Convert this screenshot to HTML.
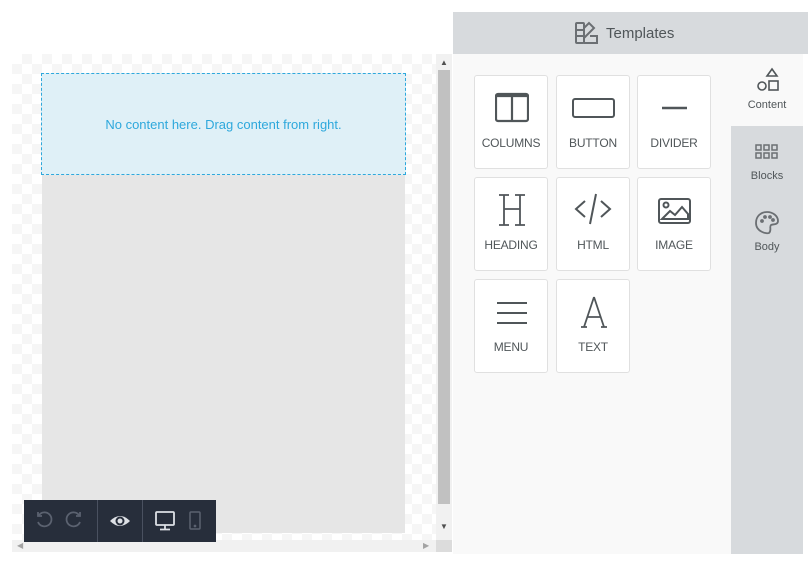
<!DOCTYPE html>
<html><head><style>
*{margin:0;padding:0;box-sizing:border-box}
body{width:808px;height:562px;background:#fff;position:relative;overflow:hidden;font-family:"Liberation Sans",sans-serif}
.abs{position:absolute}
.checker{left:12px;top:54px;width:424px;height:486px;background-color:#fff;background-image:linear-gradient(45deg,#f6f6f6 25%,transparent 25%,transparent 75%,#f6f6f6 75%),linear-gradient(45deg,#f6f6f6 25%,transparent 25%,transparent 75%,#f6f6f6 75%);background-size:20px 20px;background-position:0 0,10px 10px}
.card{position:absolute;width:74px;height:94px;background:#fff;border:1px solid #e0e0e0;border-radius:3px;text-align:center}
.card svg{position:absolute;left:20px;top:14px}
.card span{position:absolute;left:0;right:0;top:60px;font-size:12px;color:#505659;letter-spacing:-0.2px}
.tab{position:absolute;left:731px;width:72px;text-align:center;font-size:11px;color:#505659}
</style></head><body>
<div class="abs checker"></div>
<div class="abs" style="left:41px;top:73px;width:365px;height:102px;background:#dff0f7;border:1px dashed #2ea8dc;color:#2ea8dc;font-size:13px;text-align:center;line-height:102px">No content here. Drag content from right.</div>
<div class="abs" style="left:42px;top:175px;width:363px;height:358px;background:#e6e6e6"></div>
<div class="abs" style="left:436px;top:54px;width:16px;height:486px;background:#f1f1f1"></div>
<div class="abs" style="left:438px;top:70px;width:12px;height:434px;background:#c1c1c1"></div>
<div class="abs" style="left:440px;top:58px;font-size:8px;color:#505050">▲</div>
<div class="abs" style="left:440px;top:522px;font-size:8px;color:#505050">▼</div>
<div class="abs" style="left:12px;top:540px;width:424px;height:12px;background:#f1f1f1"></div>
<div class="abs" style="left:436px;top:540px;width:16px;height:12px;background:#dcdcdc"></div>
<div class="abs" style="left:17px;top:541px;font-size:8px;color:#a3a3a3">◀</div>
<div class="abs" style="left:423px;top:541px;font-size:8px;color:#a3a3a3">▶</div>
<div class="abs" style="left:24px;top:500px;width:192px;height:42px;background:#272e3b">
<svg class="abs" style="left:10px;top:10px" width="20" height="20" viewBox="0 0 20 20" fill="none" stroke="#5b6270" stroke-width="1.8"><path d="M5 5 A7 7 0 1 1 4 12"/><path d="M4 2 V6 H8"/></svg>
<svg class="abs" style="left:40px;top:10px" width="20" height="20" viewBox="0 0 20 20" fill="none" stroke="#5b6270" stroke-width="1.8"><path d="M15 5 A7 7 0 1 0 16 12"/><path d="M16 2 V6 H12"/></svg>
<div class="abs" style="left:73px;top:0;width:1px;height:42px;background:#4a5160"></div>
<svg class="abs" style="left:85px;top:11px" width="22" height="20" viewBox="0 0 22 20"><path d="M1 10 Q11 0 21 10 Q11 20 1 10Z" fill="#dde0e5"/><circle cx="11" cy="10" r="4.5" fill="#272e3b"/><circle cx="11" cy="10" r="2.5" fill="#dde0e5"/></svg>
<div class="abs" style="left:118px;top:0;width:1px;height:42px;background:#4a5160"></div>
<svg class="abs" style="left:130px;top:10px" width="22" height="22" viewBox="0 0 22 22" fill="none" stroke="#dde0e5" stroke-width="1.8"><rect x="2" y="2" width="18" height="13" rx="1"/><path d="M11 15 V19 M6 19.5 H16"/></svg>
<svg class="abs" style="left:164px;top:10px" width="14" height="22" viewBox="0 0 14 22" fill="none" stroke="#5b6270" stroke-width="1.5"><rect x="2" y="2" width="10" height="17" rx="1"/><circle cx="7" cy="16" r="0.6" fill="#5b6270"/></svg>
</div>
<div class="abs" style="left:453px;top:12px;width:355px;height:42px;background:#d7dadd"></div>
<svg class="abs" style="left:574px;top:21px" width="26" height="24" viewBox="0 0 26 24" fill="none" stroke="#6b6f73" stroke-width="2"><rect x="2" y="2" width="8" height="20" rx="1"/><path d="M2 9 H10 M2 15 H10"/><path d="M10 7 L15 2 L20 7 L10 17"/><path d="M10 22 H23 V15 H16"/></svg>
<div class="abs" style="left:606px;top:25px;font-size:15px;color:#505659">Templates</div>
<div class="abs" style="left:453px;top:54px;width:278px;height:500px;background:#f9f9f9"></div>
<div class="abs" style="left:731px;top:54px;width:72px;height:500px;background:#d7dadd"></div>
<div class="abs" style="left:731px;top:54px;width:72px;height:72px;background:#f9f9f9"></div>
<svg class="abs" style="left:755px;top:67px" width="26" height="26" viewBox="0 0 26 26" fill="none" stroke="#505659" stroke-width="1.6"><path d="M17 2 L22 9 H12 Z"/><circle cx="7" cy="19" r="4"/><rect x="14" y="14" width="9" height="9"/></svg>
<div class="tab" style="top:99px">Content</div>
<svg class="abs" style="left:755px;top:143px" width="24" height="18" viewBox="0 0 24 18" fill="none" stroke="#6b6f73" stroke-width="1.5"><rect x="1" y="2" width="5" height="5"/><rect x="9" y="2" width="5" height="5"/><rect x="17" y="2" width="5" height="5"/><rect x="1" y="10" width="5" height="5"/><rect x="9" y="10" width="5" height="5"/><rect x="17" y="10" width="5" height="5"/></svg>
<div class="tab" style="top:170px">Blocks</div>
<svg class="abs" style="left:754px;top:210px" width="26" height="26" viewBox="0 0 26 26" fill="none" stroke="#6b6f73" stroke-width="1.8"><path d="M13 2 C19 2 24 6 24 11 C24 15 19 14 17 15 C15 17 18 20 15 23 C13 24 2 22 2 13 C2 6 7 2 13 2Z"/><circle cx="8" cy="11" r="1" fill="#6b6f73"/><circle cx="11" cy="7" r="1" fill="#6b6f73"/><circle cx="16" cy="7" r="1" fill="#6b6f73"/><circle cx="19" cy="10" r="1" fill="#6b6f73"/></svg>
<div class="tab" style="top:241px">Body</div>

<div class="card" style="left:474px;top:75px"><svg width="34" height="34" viewBox="0 0 34 34" fill="none" stroke="#505659" stroke-width="2.2"><rect x="1" y="4" width="32" height="27" rx="2"/><path d="M17 4 V31 M1 6 H33"/></svg><span>COLUMNS</span></div>
<div class="card" style="left:556px;top:75px"><svg width="44" height="34" viewBox="0 0 44 34" style="left:15px" fill="none" stroke="#505659" stroke-width="2"><rect x="1" y="9" width="41" height="18" rx="2"/></svg><span>BUTTON</span></div>
<div class="card" style="left:637px;top:75px"><svg width="34" height="34" viewBox="0 0 34 34" fill="none" stroke="#505659" stroke-width="2.5"><path d="M4 18 H29"/></svg><span>DIVIDER</span></div>

<div class="card" style="left:474px;top:177px"><svg width="34" height="34" viewBox="0 0 34 34" fill="none" stroke="#505659" stroke-width="1.8"><path d="M4 3 H14 M4 33 H14 M20 3 H30 M20 33 H30 M9 3 V33 M25 3 V33 M9 17 H25"/></svg><span>HEADING</span></div>
<div class="card" style="left:556px;top:177px"><svg width="40" height="34" viewBox="0 0 40 34" style="left:16px" fill="none" stroke="#505659" stroke-width="2"><path d="M12 9 L3 17 L12 25 M28 9 L37 17 L28 25 M23 2 L17 32"/></svg><span>HTML</span></div>
<div class="card" style="left:637px;top:177px"><svg width="36" height="34" viewBox="0 0 36 34" style="left:19px" fill="none" stroke="#505659" stroke-width="2"><rect x="2" y="7" width="31" height="24" rx="2"/><circle cx="9" cy="13" r="2.5"/><path d="M5 27 L13 19 L18 23 L25 15 L31 22 V27 Z"/></svg><span>IMAGE</span></div>

<div class="card" style="left:474px;top:279px"><svg width="34" height="34" viewBox="0 0 34 34" fill="none" stroke="#505659" stroke-width="2"><path d="M2 9 H32 M2 19 H32 M2 29 H32"/></svg><span>MENU</span></div>
<div class="card" style="left:556px;top:279px"><svg width="34" height="34" viewBox="0 0 34 34" fill="none" stroke="#505659" stroke-width="1.8"><path d="M17 3 L7 33 M17 3 L27 33 M10 23 H24 M4 33 H10 M24 33 H30"/></svg><span>TEXT</span></div>
</body></html>
